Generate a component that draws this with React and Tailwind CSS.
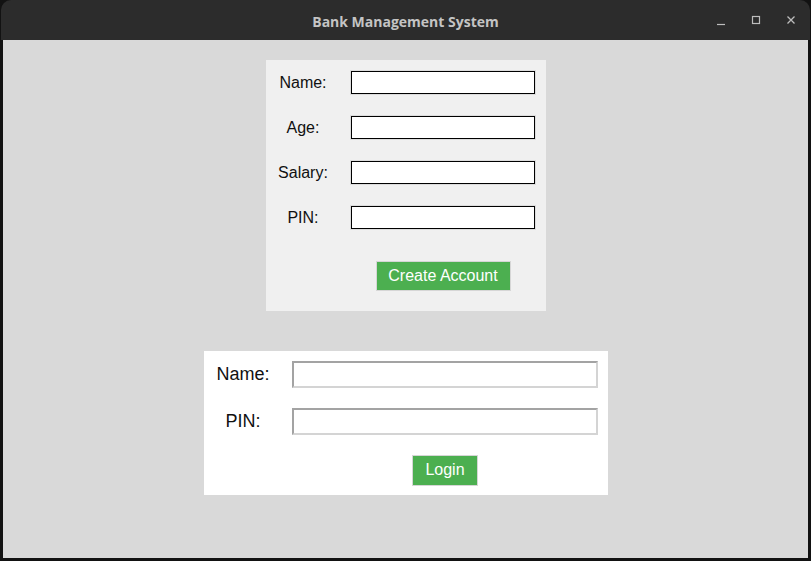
const font = { fontFamily: '"Liberation Sans", Arial, sans-serif' }

const TopRow = ({ label }) => (
  <div className="flex h-[45px] items-center">
    <div className="w-[74px] text-center text-[16px] text-[#111]">{label}</div>
    <div className="ml-[10px] border border-[#dcdcdc]">
      <input className="block h-[23px] w-[184px] border border-black bg-white outline-none" />
    </div>
  </div>
)

const BottomRow = ({ label, height }) => (
  <div className={`flex items-center ${height}`}>
    <div className="w-[78px] text-center text-[18px] text-[#111]">{label}</div>
    <input className="ml-[10px] block h-[27px] w-[306px] border-2 border-t-[#a3a3a3] border-l-[#a3a3a3] border-r-[#d4d4d4] border-b-[#d4d4d4] bg-white outline-none" />
  </div>
)

const TitleBar = () => (
  <div className="relative flex h-[40px] items-center justify-center rounded-t-[10px] bg-[#2c2c2c]">
    <span
      className="pt-[2px] text-[14px] font-bold text-[#c4c4c4]"
      style={{ fontFamily: '"Open Sans", "DejaVu Sans", sans-serif' }}
    >
      Bank Management System
    </span>
    <div className="absolute right-[12px] top-0 flex h-full items-center gap-[21px] text-[#bdbdbd]">
      <svg width="14" height="14" viewBox="0 0 14 14">
        <path d="M3 11.5h8" stroke="currentColor" strokeWidth="1.2" />
      </svg>
      <svg width="14" height="14" viewBox="0 0 14 14">
        <rect x="3.5" y="3.5" width="7" height="7" fill="none" stroke="currentColor" strokeWidth="1.2" />
      </svg>
      <svg width="14" height="14" viewBox="0 0 14 14">
        <path d="M3.5 3.5l7 7M10.5 3.5l-7 7" stroke="currentColor" strokeWidth="1.3" />
      </svg>
    </div>
  </div>
)

export default function App() {
  return (
    <div className="h-[561px] w-[811px] bg-[#121212] px-[1px]" style={font}>
      <TitleBar />
      <div className="mx-[2px] flex h-[518px] flex-col items-center bg-[#d9d9d9] pt-[20px]">
        {/* create account */}
        <div className="ml-[1px] w-[280px] bg-[#f0f0f0]">
          <TopRow label="Name:" />
          <TopRow label="Age:" />
          <TopRow label="Salary:" />
          <TopRow label="PIN:" />
          <div className="flex h-[71px] items-center pl-[84px]">
            <div className="flex w-[186px] justify-center">
              <button className="h-[30px] w-[135px] border border-[#d6d6d6] bg-[#4caf50] text-[16px] text-white">
                Create Account
              </button>
            </div>
          </div>
        </div>

        {/* login */}
        <div className="ml-[1px] mt-[40px] w-[404px] bg-white">
          <BottomRow label="Name:" height="h-[46px]" />
          <BottomRow label="PIN:" height="h-[48px]" />
          <div className="flex h-[50px] items-center pl-[88px]">
            <div className="flex w-[306px] justify-center">
              <button className="h-[31px] w-[66px] border border-[#d6d6d6] bg-[#4caf50] text-[16px] text-white">
                Login
              </button>
            </div>
          </div>
        </div>
      </div>
    </div>
  )
}
